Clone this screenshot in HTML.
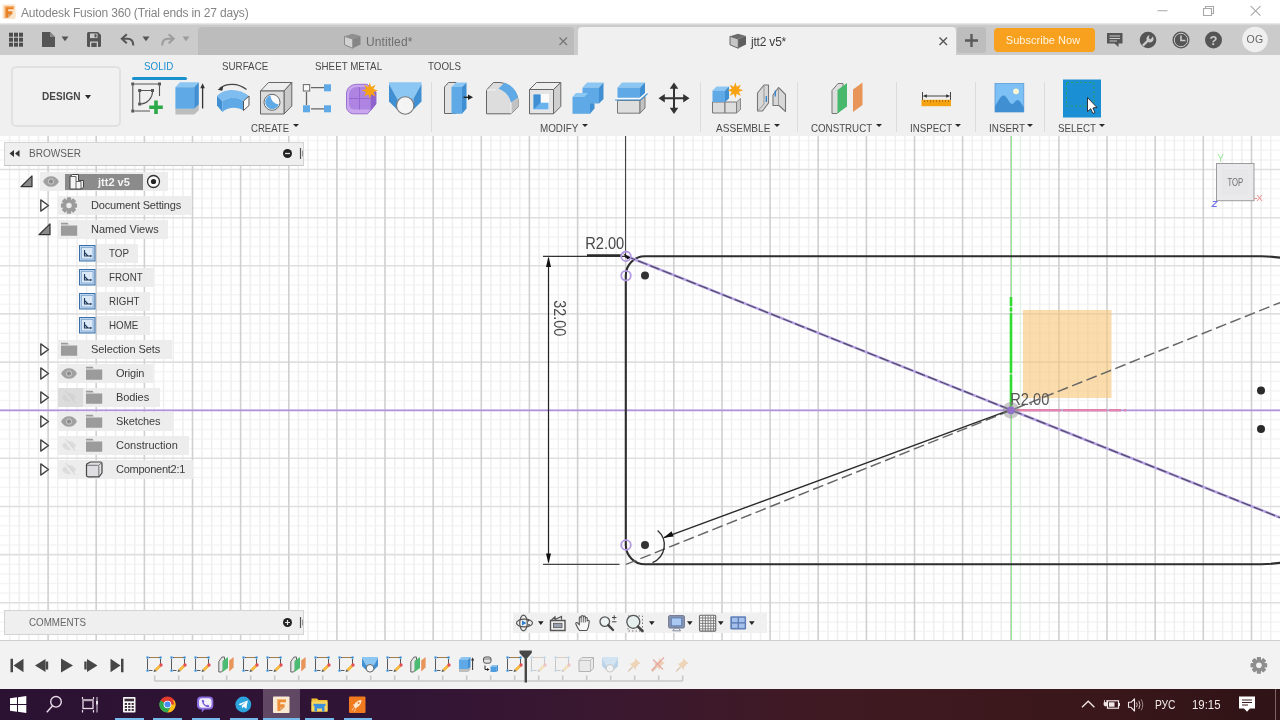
<!DOCTYPE html>
<html>
<head>
<meta charset="utf-8">
<title>Autodesk Fusion 360</title>
<style>
*{box-sizing:border-box;margin:0;padding:0}
html,body{width:1280px;height:720px;overflow:hidden;background:#fff;font-family:"Liberation Sans",sans-serif;}
#root{position:relative;width:1280px;height:720px;overflow:hidden;background:#fff;will-change:transform;-webkit-font-smoothing:antialiased}
.abs{position:absolute}
#titlebar{left:0;top:0;width:1280px;height:24px;background:#fff}
#titletext{left:21px;top:6px;font-size:12px;color:#848484;letter-spacing:-0.16px;white-space:nowrap}
#tabbar{left:0;top:24px;width:1280px;height:31px;background:#cbcbcb}
#ribbon{left:0;top:55px;width:1280px;height:81px;background:#f0f0f0}
#canvas{left:0;top:136px;width:1280px;height:504px;background:#fff}
#timeline{left:0;top:640px;width:1280px;height:49px;background:#f2f2f2;border-top:1px solid #cfcfcf}
#taskbar{left:0;top:689px;width:1280px;height:31px;background:linear-gradient(90deg,#2b1232 0%,#311436 30%,#3b182e 50%,#401a22 65%,#3a171b 85%,#2f1316 100%)}
.rtab{position:absolute;top:60px;font-size:11px;color:#4a4a4a;white-space:nowrap;letter-spacing:-0.1px}
.rlbl{position:absolute;top:121.500px;font-size:11px;color:#4a4a4a;white-space:nowrap;letter-spacing:-0.2px}
.rlbl i{display:inline-block;width:0;height:0;border-left:3px solid transparent;border-right:3px solid transparent;border-top:4px solid #333;margin-left:3px;vertical-align:2px}
.u{display:inline-block;transform:scaleX(.89);transform-origin:0 50%;letter-spacing:0}
.arr{position:absolute;top:124.200px;width:0;height:0;border-left:3px solid transparent;border-right:3px solid transparent;border-top:3.800px solid #2a2a2a}
.sep{position:absolute;top:82px;width:1px;height:50px;background:#dcdcdc}
.trow{position:absolute;height:20px;background:rgba(238,238,238,0.93);font-size:11px;color:#3c3c3c;line-height:20px;white-space:nowrap}
.tl{position:absolute;font-size:11px;color:#3c3c3c;white-space:nowrap;line-height:20px}
</style>
</head>
<body>
<div id="root">

<!-- TITLE BAR -->
<div id="titlebar" class="abs"></div>
<svg class="abs" style="left:1.500px;top:3.500px" width="15" height="16" viewBox="0 0 16 17">
<rect x="0.5" y="0.5" width="14" height="15.5" rx="1.5" fill="#fbe4c8"/>
<path d="M3 2.5H12.5V5.6H6.6V7.6H11V10.5H6.6V14.5H3Z" fill="#e8822a"/>
<path d="M3 2.5H12.5V3.6H4.2V14.5H3Z" fill="#f6a55a"/>
<path d="M6.6 10.5H11L6.6 14.5Z" fill="#b85a15" opacity="0.5"/>
</svg>
<div id="titletext" class="abs">Autodesk Fusion 360 (Trial ends in 27 days)</div>
<svg class="abs" style="left:1150px;top:0" width="130" height="24" viewBox="0 0 130 24">
<path d="M7.5 10.7H17.5" stroke="#b5b5b5" stroke-width="1.2"/>
<path d="M53.5 8.5H61.5V15.5H53.5ZM55.5 8.5V6.5H63.5V13.5H61.5" fill="none" stroke="#a8a8a8" stroke-width="1.1"/>
<path d="M100.7 6.2L110.5 15.7M110.5 6.2L100.7 15.7" stroke="#a8a8a8" stroke-width="1.1"/>
</svg>

<!-- TAB BAR -->
<div id="tabbar" class="abs"></div>
<div class="abs" style="left:0;top:23px;width:1280px;height:2px;background:linear-gradient(#eee,#d2d2d2)"></div>
<div class="abs" style="left:198px;top:27px;width:376px;height:28px;background:#bcbcbc;border-radius:4px 4px 0 0"></div>
<div class="abs" style="left:578px;top:27px;width:378px;height:28px;background:#f0f0f0;border-radius:4px 4px 0 0"></div>
<div class="abs" style="left:957px;top:27px;width:29px;height:26px;background:#bdbdbd;border-radius:3px"></div>
<div class="abs" style="left:994px;top:28px;width:101px;height:24px;background:#f8a11f;border-radius:4px;color:#fff4e0;font-size:11px;line-height:24px;text-align:center;letter-spacing:0.04px;text-indent:-3px">Subscribe Now</div>
<div class="abs" style="left:366px;top:35px;font-size:12px;color:#6e6e6e;letter-spacing:0.13px">Untitled*</div>
<div class="abs" style="left:751px;top:35px;font-size:12px;color:#3c3c3c;letter-spacing:-0.2px">jtt2 v5*</div>
<svg class="abs" style="left:0;top:24px" width="1280" height="31" viewBox="0 24 1280 31">
<!-- grid icon -->
<g fill="#4d4d4d"><rect x="9" y="32.7" width="4" height="4"/><rect x="14" y="32.7" width="4" height="4"/><rect x="19" y="32.7" width="4" height="4"/><rect x="9" y="37.7" width="4" height="4"/><rect x="14" y="37.7" width="4" height="4"/><rect x="19" y="37.7" width="4" height="4"/><rect x="9" y="42.7" width="4" height="4"/><rect x="14" y="42.7" width="4" height="4"/><rect x="19" y="42.7" width="4" height="4"/></g>
<!-- file icon -->
<path d="M42 32H50L55 37V47H42Z" fill="#555"/><path d="M50 32V37H55Z" fill="#8a8a8a"/>
<path d="M61.5 36.5H68.5L65 41.2Z" fill="#555"/>
<!-- save icon -->
<path d="M87 33.5A1.5 1.5 0 0 1 88.500 32H98L101 35V45.500A1.5 1.5 0 0 1 99.500 47H88.500A1.5 1.5 0 0 1 87 45.500Z" fill="#555"/>
<rect x="90" y="33.500" width="7.5" height="4.6" fill="#cbcbcb"/><rect x="94.5" y="34.2" width="2" height="3.200" fill="#555"/><rect x="90" y="41.500" width="8" height="5.5" fill="#cbcbcb"/><rect x="91.3" y="42.8" width="5.4" height="4.200" fill="#555"/>
<!-- undo -->
<path d="M126.800 34.300L121.800 38.800L126.800 43.300" fill="none" stroke="#555" stroke-width="2" stroke-linejoin="miter"/><path d="M122.500 38.800H127.500C131.500 38.800 133.300 41.500 133.300 45.500" fill="none" stroke="#555" stroke-width="2"/>
<path d="M142.500 36.500H149.500L146 41.200Z" fill="#555"/>
<!-- redo -->
<path d="M168.700 34.300L173.700 38.800L168.700 43.300" fill="none" stroke="#9c9c9c" stroke-width="2"/><path d="M173 38.800H168C164 38.800 162.200 41.500 162.200 45.500" fill="none" stroke="#9c9c9c" stroke-width="2"/>
<path d="M182.500 36.500H189.500L186 41.200Z" fill="#9c9c9c"/>
<!-- cube icons in tabs -->
<path d="M344.5 36.3L352.5 33.8L360.5 36L352.8 39Z" fill="#8f8f8f"/><path d="M344.5 36.3L352.8 39V48.3L344.5 44.800Z" fill="#d2d2d2"/><path d="M352.8 39L360.5 36V44.500L352.8 48.300Z" fill="#858585"/><path d="M344.5 36.3L352.8 39V48.3L344.5 44.800Z" fill="none" stroke="#8a8a8a" stroke-width="1"/>
<path d="M730 36.3L738 33.8L746 36L738.3 39Z" fill="#6c6c6c"/><path d="M730 36.3L738.3 39V48.3L730 44.800Z" fill="#c6c6c6"/><path d="M738.3 39L746 36V44.500L738.3 48.300Z" fill="#5e5e5e"/><path d="M730 36.3L738.3 39V48.3L730 44.800Z" fill="none" stroke="#666" stroke-width="1"/>
<!-- close x -->
<path d="M559.500 37.500L567 45M567 37.500L559.500 45" stroke="#777" stroke-width="1.300"/>
<path d="M939.500 37.500L947 45M947 37.500L939.500 45" stroke="#555" stroke-width="1.400"/>
<!-- plus -->
<path d="M971.500 34V47M965 40.500H978" stroke="#5a5a5a" stroke-width="2.400"/>
<!-- comment icon -->
<path d="M1107 33H1122.500V43.500H1118.500V47L1114.500 43.500H1107Z" fill="#555"/><path d="M1109.500 36H1120M1109.500 38.500H1120M1109.500 41H1117" stroke="#cbcbcb" stroke-width="1"/>
<!-- job status -->
<circle cx="1148" cy="40" r="8.300" fill="#555"/><path d="M1143.500 45L1148 40.500" stroke="#cbcbcb" stroke-width="2.400" stroke-linecap="round"/><path d="M1152.800 36.600A3.600 3.600 0 1 1 1149.600 35.300L1148.800 38L1150.500 39.500Z" fill="#cbcbcb"/>
<!-- clock -->
<circle cx="1181" cy="40" r="8.500" fill="#555"/><circle cx="1181" cy="40" r="6.700" fill="none" stroke="#cbcbcb" stroke-width="1"/><path d="M1181 35.500V40.500H1185.500" stroke="#cbcbcb" stroke-width="1.600" fill="none"/>
<!-- help -->
<circle cx="1213.500" cy="40" r="8.500" fill="#555"/>
<text x="1213.500" y="44.800" text-anchor="middle" font-family="Liberation Sans, sans-serif" font-weight="bold" font-size="13" fill="#cbcbcb">?</text>
<!-- avatar -->
<circle cx="1255" cy="39.500" r="12.800" fill="#efefef"/>
<text x="1255" y="43.400" text-anchor="middle" font-family="Liberation Sans, sans-serif" font-size="10.500" fill="#666" letter-spacing="0.300">OG</text>
</svg>

<!-- RIBBON -->
<div id="ribbon" class="abs"></div>
<div class="abs" style="left:11px;top:66px;width:110px;height:61px;border:2px solid #e1e1e1;border-radius:5px;background:#f1f1f1"></div>
<div class="abs" style="left:42px;top:90px;font-size:11px;font-weight:bold;color:#464646;letter-spacing:0"><span class="u" style="transform:scaleX(.912)">DESIGN</span></div><div class="arr" style="left:84.500px;top:94.500px;border-left-width:3.300px;border-right-width:3.300px;border-top-width:4px"></div>
<div class="rtab" style="left:144px;color:#1b8fd0"><span class="u">SOLID</span></div>
<div class="abs" style="left:132px;top:77px;width:55px;height:3px;border-radius:1.5px;background:#1a90cf"></div>
<div class="rtab" style="left:222px"><span class="u">SURFACE</span></div>
<div class="rtab" style="left:315px"><span class="u">SHEET METAL</span></div>
<div class="rtab" style="left:428px"><span class="u">TOOLS</span></div>
<div class="sep" style="left:431px"></div><div class="sep" style="left:700px"></div><div class="sep" style="left:797px"></div><div class="sep" style="left:896px"></div><div class="sep" style="left:975px"></div><div class="sep" style="left:1044px"></div>
<div class="rlbl" style="left:251px"><span class="u" style="transform:scaleX(0.868)">CREATE</span></div><div class="arr" style="left:292.6px"></div>
<div class="rlbl" style="left:540px"><span class="u" style="transform:scaleX(0.895)">MODIFY</span></div><div class="arr" style="left:582.1px"></div>
<div class="rlbl" style="left:716px"><span class="u" style="transform:scaleX(0.917)">ASSEMBLE</span></div><div class="arr" style="left:774px"></div>
<div class="rlbl" style="left:811px"><span class="u" style="transform:scaleX(0.885)">CONSTRUCT</span></div><div class="arr" style="left:876.2px"></div>
<div class="rlbl" style="left:910px"><span class="u" style="transform:scaleX(0.885)">INSPECT</span></div><div class="arr" style="left:955px"></div>
<div class="rlbl" style="left:989px"><span class="u" style="transform:scaleX(0.898)">INSERT</span></div><div class="arr" style="left:1027px"></div>
<div class="rlbl" style="left:1058px"><span class="u" style="transform:scaleX(0.888)">SELECT</span></div><div class="arr" style="left:1098.5px"></div>
<svg class="abs" style="left:0;top:76px" width="1280" height="46" viewBox="0 76 1280 46">
<!-- sketch -->
<g stroke="#555" stroke-width="1.1" fill="none"><path d="M134.500 84H158M159.500 85.500V96M132.800 85.500V109.500M134.500 111H150"/><path d="M141 90.500H151M139.700 92V102.500M152.500 92C152.500 98 147 103.500 141 104"/></g>
<g fill="#555"><rect x="131.300" y="82.500" width="3" height="3"/><rect x="158" y="82.500" width="3" height="3"/><rect x="131.300" y="109.500" width="3" height="3"/><rect x="138.200" y="89" width="3" height="3"/><rect x="151" y="89" width="3" height="3"/><rect x="138.200" y="102.500" width="3" height="3"/></g>
<path d="M154.200 100.500H157.800V105.500H162.800V109.100H157.800V114.100H154.200V109.100H149.200V105.500H154.200Z" fill="#2ea94a"/>
<!-- extrude -->
<path d="M175.400 108.800H194.200L198.800 104.500V110.200L194.200 114.500H175.400Z" fill="#bdbdbd"/>
<path d="M175.400 87.200L180 82.300H198.800L194.200 87.200Z" fill="#8cc6f2"/>
<path d="M175.400 87.200H194.200V108.800H175.400Z" fill="#5fa9e6"/>
<path d="M194.200 87.200L198.800 82.300V104.500L194.200 108.800Z" fill="#3f8fd2"/>
<path d="M202.600 86V108.500" stroke="#333" stroke-width="1.300"/><path d="M202.600 83.200L200.300 88.200H204.900Z" fill="#333"/>
<!-- revolve -->
<path d="M219.500 88.500C226 83 238 82.500 246.500 89.500" fill="none" stroke="#444" stroke-width="1.200"/><path d="M217.600 89.800L223.300 86.300L222.300 90.800Z" fill="#333"/>
<path d="M217 96C224 88 240 88 249 96L243.500 101C237 96.500 228 97 222.500 101.500Z" fill="#7fbdf0"/>
<path d="M217 96L222.500 101.500V112L217 105.500Z" fill="#3f8fd2"/>
<path d="M222.500 101.500C228 97 237 96.500 243.500 101V110.500C237 106.500 228 107 222.500 112Z" fill="#5fa9e6"/>
<path d="M243.500 101L249 96V105.500L243.500 110.500Z" fill="#fafafa" stroke="#555" stroke-width="1"/>
<!-- hole -->
<path d="M260.500 91L268.500 82.500H291.800L284 91Z" fill="#eeeeee" stroke="#666" stroke-width="1"/>
<path d="M284 91L291.800 82.500V106L284 114Z" fill="#c9c9c9" stroke="#666" stroke-width="1"/>
<path d="M260.500 91H284V114H260.500Z" fill="#dcdcdc" stroke="#666" stroke-width="1"/>
<circle cx="272" cy="102.300" r="8" fill="#fafafa" stroke="#666" stroke-width="1"/>
<path d="M270.500 95.300A7 7 0 1 0 278.800 104.500C274 104 270.500 100 270.500 95.300Z" fill="#5fa9e6"/>
<!-- pattern -->
<path d="M311 87.700H324M306.500 92V105M311 108.800H324" stroke="#666" stroke-width="1.300"/>
<rect x="303.300" y="84.600" width="6.400" height="6.400" fill="#fafafa" stroke="#666" stroke-width="1"/>
<rect x="324" y="84.300" width="7" height="7" fill="#5fa9e6"/><rect x="303" y="105.300" width="7" height="7" fill="#5fa9e6"/><rect x="324" y="105.300" width="7" height="7" fill="#5fa9e6"/>
<!-- form -->
<path d="M346.500 94C346.500 88 351 84.300 357 84.300H367L376 92V104L367.500 113.800H354C349.500 113.800 346.500 110.500 346.500 106.500Z" fill="#c9a7ee" stroke="#9a6fd0" stroke-width="1"/>
<path d="M349 95C349 90 352.500 87 357.500 87H366L370.500 92V109.500H355C351.500 109.500 349 107.500 349 104Z" fill="#ae84e2"/>
<path d="M370.500 92L376 92V104L370.500 111Z" fill="#8f63cc"/>
<path d="M359.500 87V109.500M349 98.500H370.500" stroke="#9468d0" stroke-width="1"/>
<path d="M369.80 82.40L371.29 87.00L375.60 84.80L373.40 89.11L378.00 90.60L373.40 92.09L375.60 96.40L371.29 94.20L369.80 98.80L368.31 94.20L364.00 96.40L366.20 92.09L361.60 90.60L366.20 89.11L364.00 84.80L368.31 87.00Z" fill="#f9a313"/>
<!-- loft -->
<path d="M389 82.300H421.500V84L413.500 98.500H397L389 84Z" fill="#8cc6f2"/>
<path d="M389 84L397 98.500V109.500L389 101.500Z" fill="#3f8fd2"/><path d="M421.500 84L413.500 98.500V109.500L421.500 101.500Z" fill="#3f8fd2"/>
<path d="M397 98.500H413.500V109.500H397Z" fill="#5fa9e6"/>
<circle cx="405.200" cy="105.500" r="8.700" fill="#f4f4f4" stroke="#777" stroke-width="1.100"/>
<!-- press pull -->
<path d="M444.500 87L448.500 82.500H456V113.500H444.500Z" fill="#e2e2e2" stroke="#666" stroke-width="1"/>
<path d="M451.500 87L456 82.500H466.500L462 87Z" fill="#8cc6f2"/>
<path d="M451.500 87H462V113.800H451.500Z" fill="#5fa9e6"/>
<path d="M462 87L466.500 82.500V108.500L462 113.800Z" fill="#3f8fd2"/>
<path d="M463.500 97.300H469" stroke="#222" stroke-width="1.400"/><path d="M473 97.300L468 94.500V100.100Z" fill="#222"/>
<!-- fillet -->
<path d="M486.500 90L493.500 82.500H500C509 83.500 516.500 90 518 99.500V107L511 113.800H486.500Z" fill="#dddddd" stroke="#666" stroke-width="1"/>
<path d="M511 102.500L518 97.500V107L511 113.800Z" fill="#c2c2c2"/>
<path d="M498.500 88.500L504.500 82.800C511.500 85 516.500 90.500 518 97.500L511 102.500C509.500 96 505 91 498.500 88.500Z" fill="#5fa9e6"/>
<path d="M486.500 90H496M511 102.500V113.500" stroke="#f2f2f2" stroke-width="1" fill="none"/>
<!-- shell -->
<path d="M529.500 89.500L536.500 82.500H560.800L553.500 89.500Z" fill="#eeeeee" stroke="#666" stroke-width="1"/>
<path d="M553.500 89.500L560.800 82.500V106.500L553.500 113.800Z" fill="#cfcfcf" stroke="#666" stroke-width="1"/>
<path d="M529.500 89.500H553.500V113.800H529.500Z" fill="#e4e4e4" stroke="#666" stroke-width="1"/>
<path d="M533 94H549V110H533Z" fill="#fafafa"/>
<path d="M533.500 94.500H540.500V102.800H548.500V109.500H533.500Z" fill="#6ab2ee"/><path d="M533.500 94.500H540.500V102.800L533.500 109.500Z" fill="#3f8fd2"/>
<!-- combine -->
<path d="M582.500 87.500L587 82.500H603.500L599 87.500Z" fill="#8cc6f2"/><path d="M599 87.500L603.500 82.500V99L599 103.500Z" fill="#3f8fd2"/><path d="M582.500 87.500H599V103.500H582.500Z" fill="#5fa9e6"/>
<path d="M572.500 97L576 93H588L584.500 97Z" fill="#8cc6f2"/><path d="M572.500 97H590V113.800H572.500Z" fill="#5fa9e6"/><path d="M590 103.500H594L590 113.800Z" fill="#3f8fd2"/><path d="M590 103.500L594.500 103.500V108.500L590 113.800Z" fill="#3f8fd2"/>
<!-- split -->
<path d="M617.500 100.500H640V113.200H617.500Z" fill="#dedede" stroke="#777" stroke-width="1"/><path d="M640 100.500L645 96.500V108L640 113.200Z" fill="#c2c2c2" stroke="#777" stroke-width="1"/>
<path d="M617.500 87.500L622 82.500H645L640 87.500Z" fill="#8cc6f2"/><path d="M617.500 87.500H640V98.500H617.500Z" fill="#5fa9e6"/><path d="M640 87.500L645 82.500V94L640 98.500Z" fill="#3f8fd2"/>
<path d="M615 100H640.500L647.500 93.500" stroke="#3f8fd2" stroke-width="1.200" fill="none"/><path d="M615 98.300H640L647.500 91.800" stroke="#fafafa" stroke-width="1.300" fill="none"/>
<!-- move -->
<path d="M674 86V110.500M662 98.200H686" stroke="#333" stroke-width="2"/>
<path d="M674 82.500L669.700 88.800H678.300ZM674 114L669.700 107.700H678.300ZM658.500 98.200L664.800 93.900V102.500ZM689.500 98.200L683.200 93.900V102.500Z" fill="#333"/>
<!-- new component -->
<path d="M712.500 102H725V113H712.500Z" fill="#dcdcdc" stroke="#777" stroke-width="1"/>
<path d="M725 102L729 98.500H740.500L736.500 102Z" fill="#f0f0f0"/><path d="M725 102H736.500V113H725Z" fill="#dedede" stroke="#777" stroke-width="1"/><path d="M736.500 102L740.500 98.500V109.500L736.500 113Z" fill="#c6c6c6" stroke="#777" stroke-width="0.800"/>
<path d="M712.500 90.500L716.500 86.500H729L725 90.500Z" fill="#8cc6f2"/><path d="M712.500 90.500H725V102H712.500Z" fill="#5fa9e6"/><path d="M725 90.500L729 86.500V98.500L725 102Z" fill="#3f8fd2"/>
<path d="M735.30 82.30L736.75 86.79L740.96 84.64L738.81 88.85L743.30 90.30L738.81 91.75L740.96 95.96L736.75 93.81L735.30 98.30L733.85 93.81L729.64 95.96L731.79 91.75L727.30 90.30L731.79 88.85L729.64 84.64L733.85 86.79Z" fill="#f9a313"/>
<!-- joint -->
<path d="M757.500 93L764 85H768.500V103L762.500 111H757.500Z" fill="#d8d8d8" stroke="#777" stroke-width="1.100" stroke-linejoin="round"/>
<path d="M764 85.500V104L758 110.500" fill="none" stroke="#9a9a9a" stroke-width="1"/>
<path d="M773 95L778.500 87.500L785.500 94.500V111.500L779 105.500H773Z" fill="#d8d8d8" stroke="#777" stroke-width="1.100" stroke-linejoin="round"/>
<path d="M778.500 88V105" stroke="#9a9a9a" stroke-width="1" fill="none"/>
<path d="M766.300 96V102M775.300 90.500V96.500" stroke="#2f86cf" stroke-width="1.300"/>
<!-- construct -->
<path d="M832 90.500L838 83.500H843V106.500L837 113.500H832Z" fill="#dedede" stroke="#777" stroke-width="1"/>
<path d="M837.500 90L847 83V106.500L837.500 113.500Z" fill="#48b86c"/>
<path d="M853 89.500L862.500 82.500V105L853 112Z" fill="#e8955a"/>
<!-- inspect -->
<g transform="translate(0 -1)"><path d="M922.500 93V101M950.500 93V101" stroke="#444" stroke-width="1"/><path d="M925 97H948" stroke="#444" stroke-width="1"/><path d="M922.800 97L926.800 95.200V98.800ZM950.200 97L946.200 95.200V98.800Z" fill="#333"/>
<rect x="921.500" y="100.800" width="29.500" height="6.400" fill="#f5a313"/><path d="M924.500 101V103M927.500 101V103M930.500 101V103.500M933.500 101V103M936.500 101V103M939.500 101V103.500M942.500 101V103M945.500 101V103M948.500 101V103" stroke="#a86a00" stroke-width="0.800"/></g>
<!-- insert -->
<rect x="995" y="83.500" width="28.800" height="28.500" fill="#7cc0f5"/><rect x="995" y="83.500" width="28.800" height="28.500" fill="none" stroke="#5a9bd8" stroke-width="0.800"/>
<path d="M995 106C998 102 1000.500 95.500 1003.500 95.500C1007 95.500 1009 103.500 1012 104C1014 104 1015.500 100 1017.500 100C1020 100 1022 105 1023.800 107V112H995Z" fill="#3f8fd2"/>

<circle cx="1016" cy="91.300" r="2.900" fill="#fbf5d0"/>
<!-- select -->
<rect x="1063" y="79.500" width="38" height="38" fill="#1b8fd3"/>
<rect x="1066.500" y="82.500" width="27.500" height="23.500" fill="none" stroke="#2ea06a" stroke-width="1" stroke-dasharray="2.500 2"/>
<path d="M1087.500 97.500V111.500L1090.700 108.700L1092.900 113.500L1095 112.500L1092.900 107.900L1097 107.500Z" fill="#fff" stroke="#222" stroke-width="0.900" stroke-linejoin="round"/>
</svg>

<!-- CANVAS -->
<div id="canvas" class="abs">
<svg id="cv" width="1280" height="504" viewBox="0 136 1280 504" style="position:absolute;left:0;top:0">
<rect x="0" y="136" width="1280" height="504" fill="#fff"/>
<path d="M0 140.6H1280M0 150.3H1280M0 159.9H1280M0 179.2H1280M0 188.8H1280M0 198.4H1280M0 208.0H1280M0 227.3H1280M0 236.9H1280M0 246.5H1280M0 256.2H1280M0 275.4H1280M0 285.0H1280M0 294.7H1280M0 304.3H1280M0 323.6H1280M0 333.2H1280M0 342.8H1280M0 352.4H1280M0 371.7H1280M0 381.3H1280M0 390.9H1280M0 400.6H1280M0 419.8H1280M0 429.5H1280M0 439.1H1280M0 448.7H1280M0 468.0H1280M0 477.6H1280M0 487.2H1280M0 496.8H1280M0 516.1H1280M0 525.7H1280M0 535.4H1280M0 545.0H1280M0 564.2H1280M0 573.9H1280M0 583.5H1280M0 593.1H1280M0 612.4H1280M0 622.0H1280M0 631.6H1280" stroke="#f5f5f5" stroke-width="1.5" fill="none"/>
<path d="M9.6 136V640M19.2 136V640M28.8 136V640M38.5 136V640M57.7 136V640M67.3 136V640M77.0 136V640M86.6 136V640M105.8 136V640M115.5 136V640M125.1 136V640M134.7 136V640M154.0 136V640M163.6 136V640M173.2 136V640M182.9 136V640M202.1 136V640M211.7 136V640M221.4 136V640M231.0 136V640M250.2 136V640M259.9 136V640M269.5 136V640M279.1 136V640M298.4 136V640M308.0 136V640M317.6 136V640M327.3 136V640M346.5 136V640M356.1 136V640M365.8 136V640M375.4 136V640M394.7 136V640M404.3 136V640M413.9 136V640M423.5 136V640M442.8 136V640M452.4 136V640M462.0 136V640M471.7 136V640M490.9 136V640M500.5 136V640M510.2 136V640M519.8 136V640M539.1 136V640M548.7 136V640M558.3 136V640M567.9 136V640M587.2 136V640M596.8 136V640M606.4 136V640M616.1 136V640M635.3 136V640M645.0 136V640M654.6 136V640M664.2 136V640M683.5 136V640M693.1 136V640M702.7 136V640M712.3 136V640M731.6 136V640M741.2 136V640M750.9 136V640M760.5 136V640M779.7 136V640M789.4 136V640M799.0 136V640M808.6 136V640M827.9 136V640M837.5 136V640M847.1 136V640M856.7 136V640M876.0 136V640M885.6 136V640M895.3 136V640M904.9 136V640M924.1 136V640M933.8 136V640M943.4 136V640M953.0 136V640M972.3 136V640M981.9 136V640M991.5 136V640M1001.2 136V640M1020.4 136V640M1030.0 136V640M1039.7 136V640M1049.3 136V640M1068.5 136V640M1078.2 136V640M1087.8 136V640M1097.4 136V640M1116.7 136V640M1126.3 136V640M1135.9 136V640M1145.6 136V640M1164.8 136V640M1174.4 136V640M1184.1 136V640M1193.7 136V640M1212.9 136V640M1222.6 136V640M1232.2 136V640M1241.8 136V640M1261.1 136V640M1270.7 136V640" stroke="#efefef" stroke-width="1.5" fill="none"/>
<path d="M0 169.5H1280M0 217.7H1280M0 265.8H1280M0 313.9H1280M0 362.1H1280M0 410.2H1280M0 458.3H1280M0 506.5H1280M0 554.6H1280M0 602.7H1280" stroke="#dfdfdf" stroke-width="1.6" fill="none"/>
<path d="M48.1 136V640M96.2 136V640M144.4 136V640M192.5 136V640M240.6 136V640M288.8 136V640M336.9 136V640M385.0 136V640M433.2 136V640M481.3 136V640M529.4 136V640M577.6 136V640M625.7 136V640M673.8 136V640M722.0 136V640M770.1 136V640M818.2 136V640M866.4 136V640M914.5 136V640M962.6 136V640M1010.8 136V640M1058.9 136V640M1107.0 136V640M1155.2 136V640M1203.3 136V640M1251.5 136V640" stroke="#d0d0d0" stroke-width="1.6" fill="none"/>

<!-- axes -->
<line x1="1011.5" y1="136" x2="1011.5" y2="640" stroke="#8ff08f" stroke-width="1"/>
<line x1="1020.5" y1="136" x2="1020.5" y2="640" stroke="#dff5df" stroke-width="1"/>
<line x1="0" y1="410.4" x2="1280" y2="410.4" stroke="#b093dc" stroke-width="1.8"/>
<!-- orange selection square -->
<rect x="1023" y="310" width="88.5" height="88" fill="#f9c574" fill-opacity="0.6"/>
<!-- thick green Y axis -->
<line x1="1011" y1="297" x2="1011" y2="408" stroke="#2fdc2f" stroke-width="2.6" stroke-dasharray="9 1.5 4 1.5 60 1.5 200"/>
<!-- red X axis -->
<line x1="1013" y1="410.3" x2="1126" y2="410.3" stroke="#e285ae" stroke-width="2.6" stroke-dasharray="48 2 44 2 12 3"/>
<!-- thin vertical construction up from corner -->
<line x1="625.5" y1="136" x2="625.5" y2="258" stroke="#444" stroke-width="1"/>
<!-- rectangle profile -->
<path d="M1290 259.4A134 134 0 0 0 1261.500 256.300H645.2A19.2 19.2 0 0 0 625.8 275.5V545A19.2 19.2 0 0 0 645.2 564.2H1261.500A135 135 0 0 0 1290 561.100" fill="none" stroke="#2e2e2e" stroke-width="2.1"/>

<!-- purple diagonal -->
<line x1="626" y1="256" x2="1280" y2="517.6" stroke="#b8a2e6" stroke-width="2.6"/>
<line x1="626" y1="256" x2="1280" y2="517.6" stroke="#504a6a" stroke-width="1.25" stroke-dasharray="10 3"/>
<!-- grey dashed diagonal -->
<line x1="626" y1="564.4" x2="1280" y2="302.6" stroke="#666" stroke-width="1.45" stroke-dasharray="11 4.5"/>
<!-- radial dim leader -->
<line x1="664" y1="537.6" x2="1011" y2="409.6" stroke="#2a2a2a" stroke-width="1.4"/>
<path d="M663.5 537.8L671.6 531.2 673.6 536.4Z" fill="#111"/>
<path d="M657.6 530.4A19.2 19.2 0 0 1 652.5 562.7" fill="none" stroke="#2b2b2b" stroke-width="1.3"/>
<!-- vertical dimension 32.00 -->
<line x1="548.5" y1="258" x2="548.5" y2="562" stroke="#222" stroke-width="1.2"/>
<path d="M548.5 256.6L546 267H551ZM548.5 563.8L546 553.4H551Z" fill="#111"/>
<line x1="543" y1="256.4" x2="626" y2="256.4" stroke="#333" stroke-width="1.1"/>
<line x1="587" y1="255.3" x2="621" y2="255.3" stroke="#2b2b2b" stroke-width="2"/>
<line x1="543" y1="564.4" x2="619.5" y2="564.4" stroke="#444" stroke-width="1.1"/>
<text transform="translate(553.5 300.2) rotate(90) scale(0.9 1)" font-family="Liberation Sans, sans-serif" font-size="16" fill="#484848">32.00</text>
<text transform="translate(585.2 249.400) scale(0.915 1)" font-family="Liberation Sans, sans-serif" font-size="16" fill="#484848">R2.00</text>
<text transform="translate(1010.3 404.600) scale(0.915 1)" font-family="Liberation Sans, sans-serif" font-size="16" fill="#555">R2.00</text>
<!-- snap rings -->
<circle cx="626" cy="256.3" r="4.8" fill="none" stroke="#b298e2" stroke-width="1.8"/>
<path d="M623 253.2L630.4 257.6 627.4 259.4Z" fill="#111"/>
<circle cx="626" cy="275.6" r="4.8" fill="none" stroke="#b298e2" stroke-width="1.8"/>
<circle cx="626" cy="545" r="4.8" fill="none" stroke="#b298e2" stroke-width="1.8"/>
<!-- center points -->
<circle cx="645" cy="275.6" r="4" fill="#333"/>
<circle cx="645" cy="545" r="4" fill="#333"/>
<circle cx="1261" cy="390.6" r="4" fill="#2a2a2a"/>
<circle cx="1261" cy="429" r="4" fill="#2a2a2a"/>
<!-- origin -->
<circle cx="1011" cy="410.3" r="8.4" fill="#8a8a8a" fill-opacity="0.45"/>
<circle cx="1011" cy="410.3" r="3.9" fill="#9273c8"/>
<!-- view cube -->
<rect x="1216.500" y="163.500" width="37.500" height="37.200" fill="#e8e8eb" fill-opacity="0.930" stroke="#9c9c9c" stroke-width="1"/>
<rect x="1222" y="169" width="26.500" height="26" fill="#e4e4e8" fill-opacity="0.600"/>
<text transform="translate(1227.400 185.600) scale(0.770 1)" font-family="Liberation Sans, sans-serif" font-size="10" fill="#707070">TOP</text>
<text x="1217.300" y="161.600" font-family="Liberation Sans, sans-serif" font-size="10" fill="#9be69b">Y</text>
<text x="1256.300" y="200.900" font-family="Liberation Sans, sans-serif" font-size="9.800" fill="#f08c8c">X</text>
<text x="1211.500" y="206.600" font-family="Liberation Sans, sans-serif" font-size="9.800" font-style="italic" font-weight="bold" fill="#6f6fe8">Z</text>
<path d="M1254 198.500H1257" stroke="#f08c8c" stroke-width="1"/>
</svg>
</div>

<!-- BROWSER -->
<div class="abs" style="left:4px;top:142px;width:300px;height:24px;background:#efefef;border:1px solid #d4d4d4;border-bottom-color:#c6c6c6"></div>
<div class="abs" style="left:29px;top:147px;font-size:11px;color:#5e5e5e;"><span class="u" style="transform:scaleX(.915)">BROWSER</span></div>
<div class="abs" style="left:40px;top:172px;width:128px;height:19px;background:rgba(236,236,236,0.94)"></div>
<div class="abs" style="left:65px;top:173.500px;width:78px;height:16px;background:#8b8b8b"></div>
<div class="abs" style="left:98px;top:173.500px;height:16px;line-height:16px;font-size:11px;font-weight:bold;color:#f4f4f4;letter-spacing:0;white-space:nowrap">jtt2 v5</div>
<div class="abs" style="left:58px;top:196px;width:134px;height:19px;background:rgba(236,236,236,0.94)"></div>
<div class="tl" style="left:91px;top:195.5px;height:19px;line-height:19px;letter-spacing:-0.17px">Document Settings</div>
<div class="abs" style="left:58px;top:220px;width:110px;height:19px;background:rgba(236,236,236,0.94)"></div>
<div class="tl" style="left:91px;top:219.5px;height:19px;line-height:19px">Named Views</div>
<div class="abs" style="left:97px;top:244px;width:41px;height:19px;background:rgba(236,236,236,0.94)"></div>
<div class="tl" style="left:109px;top:243.5px;height:19px;line-height:19px"><span class="u">TOP</span></div>
<div class="abs" style="left:97px;top:268px;width:57px;height:19px;background:rgba(236,236,236,0.94)"></div>
<div class="tl" style="left:109px;top:267.5px;height:19px;line-height:19px"><span class="u">FRONT</span></div>
<div class="abs" style="left:97px;top:292px;width:53px;height:19px;background:rgba(236,236,236,0.94)"></div>
<div class="tl" style="left:109px;top:291.5px;height:19px;line-height:19px"><span class="u">RIGHT</span></div>
<div class="abs" style="left:97px;top:316px;width:53px;height:19px;background:rgba(236,236,236,0.94)"></div>
<div class="tl" style="left:109px;top:315.5px;height:19px;line-height:19px"><span class="u">HOME</span></div>
<div class="abs" style="left:58px;top:340px;width:114px;height:19px;background:rgba(236,236,236,0.94)"></div>
<div class="tl" style="left:91px;top:339.5px;height:19px;line-height:19px;letter-spacing:-0.09px">Selection Sets</div>
<div class="abs" style="left:58px;top:364px;width:95px;height:19px;background:rgba(236,236,236,0.94)"></div>
<div class="tl" style="left:116px;top:363.5px;height:19px;line-height:19px;letter-spacing:-0.2px">Origin</div>
<div class="abs" style="left:58px;top:388px;width:102px;height:19px;background:rgba(236,236,236,0.94)"></div>
<div class="abs" style="left:58px;top:388px;width:25px;height:19px;background:#dcdcdc"></div>
<div class="tl" style="left:116px;top:387.5px;height:19px;line-height:19px;letter-spacing:-0.1px">Bodies</div>
<div class="abs" style="left:58px;top:412px;width:115px;height:19px;background:rgba(236,236,236,0.94)"></div>
<div class="tl" style="left:116px;top:411.5px;height:19px;line-height:19px;letter-spacing:-0.09px">Sketches</div>
<div class="abs" style="left:58px;top:436px;width:131px;height:19px;background:rgba(236,236,236,0.94)"></div>
<div class="tl" style="left:116px;top:435.5px;height:19px;line-height:19px">Construction</div>
<div class="abs" style="left:58px;top:460px;width:135px;height:19px;background:rgba(236,236,236,0.94)"></div>
<div class="tl" style="left:116px;top:459.5px;height:19px;line-height:19px;letter-spacing:-0.26px">Component2:1</div>
<svg class="abs" style="left:0;top:137px" width="310" height="360" viewBox="0 137 310 360">
<path d="M14 150L9.500 153.500L14 157ZM19.500 150L15 153.500L19.500 157Z" fill="#333"/>
<circle cx="287.500" cy="153.500" r="4.500" fill="#222"/><path d="M285 153.500H290" stroke="#e3e3e3" stroke-width="1.300"/><path d="M300.500 148V159" stroke="#555" stroke-width="1.200"/><path d="M302.500 150.500V156.500" stroke="#999" stroke-width="1"/>
<path d="M32 175.9V186.7H21Z" fill="#8a8a8a" stroke="#333" stroke-width="1.2" stroke-linejoin="round"/>
<g opacity="1"><path d="M43.0 181.5C46.5 174.5 55.5 174.5 59.0 181.5C55.5 188.5 46.5 188.5 43.0 181.5Z" fill="#a0a0a0"/><circle cx="51.0" cy="181.5" r="2.7" fill="#8e8e8e" stroke="#cfcfcf" stroke-width="1"/></g>
<path d="M70 176.500L72.500 174.500H78.500V180.500H83.500V187.500L81 189H70Z" fill="#f4f4f4" stroke="#444" stroke-width="1" stroke-linejoin="round"/><path d="M76 181.500H81V189M76 181.500V189M70 176.500H76V181.500" fill="none" stroke="#555" stroke-width="0.900"/>
<circle cx="153.500" cy="181.500" r="6" fill="#fbfbfb" stroke="#333" stroke-width="1.300"/><circle cx="153.500" cy="181.500" r="2.600" fill="#222"/>
<path d="M40.8 199.9L48.5 205.5L40.8 211.1Z" fill="#fbfbfb" stroke="#444" stroke-width="1.4" stroke-linejoin="round"/>
<rect x="66.900" y="197.5" width="4.200" height="16" rx="0.600" transform="rotate(0 69 205.5)" fill="#9b9b9b"/><rect x="66.900" y="197.5" width="4.200" height="16" rx="0.600" transform="rotate(45 69 205.5)" fill="#9b9b9b"/><rect x="66.900" y="197.5" width="4.200" height="16" rx="0.600" transform="rotate(90 69 205.5)" fill="#9b9b9b"/><rect x="66.900" y="197.5" width="4.200" height="16" rx="0.600" transform="rotate(135 69 205.5)" fill="#9b9b9b"/><rect x="66.900" y="197.5" width="4.200" height="16" rx="0.600" transform="rotate(180 69 205.5)" fill="#9b9b9b"/><rect x="66.900" y="197.5" width="4.200" height="16" rx="0.600" transform="rotate(225 69 205.5)" fill="#9b9b9b"/><rect x="66.900" y="197.5" width="4.200" height="16" rx="0.600" transform="rotate(270 69 205.5)" fill="#9b9b9b"/><rect x="66.900" y="197.5" width="4.200" height="16" rx="0.600" transform="rotate(315 69 205.5)" fill="#9b9b9b"/><circle cx="69" cy="205.5" r="5.800" fill="#9b9b9b"/><circle cx="69" cy="205.5" r="2.700" fill="#ececec"/>
<path d="M50 223.9V234.7H39Z" fill="#8a8a8a" stroke="#333" stroke-width="1.2" stroke-linejoin="round"/>
<path d="M61.0 222.8H67.6L68.8 224.6H61.0ZM61.0 225.4H77.2V235.8H61.0Z" fill="#9b9b9b"/>
<rect x="79.5" y="245.5" width="15.5" height="15.5" fill="#bcd6f0" stroke="#3a6ea5" stroke-width="1"/><rect x="81.5" y="247.5" width="11.5" height="11.5" fill="#dbe9f7" stroke="#7fa6cf" stroke-width="0.8"/><path d="M84.5 250.0V256.0H90.5M84.5 252.5L88 256.0" fill="none" stroke="#1f3b5c" stroke-width="1.1"/><circle cx="90.8" cy="256.0" r="0.9" fill="#1f3b5c"/>
<rect x="79.5" y="269.5" width="15.5" height="15.5" fill="#bcd6f0" stroke="#3a6ea5" stroke-width="1"/><rect x="81.5" y="271.5" width="11.5" height="11.5" fill="#dbe9f7" stroke="#7fa6cf" stroke-width="0.8"/><path d="M84.5 274.0V280.0H90.5M84.5 276.5L88 280.0" fill="none" stroke="#1f3b5c" stroke-width="1.1"/><circle cx="90.8" cy="280.0" r="0.9" fill="#1f3b5c"/>
<rect x="79.5" y="293.5" width="15.5" height="15.5" fill="#bcd6f0" stroke="#3a6ea5" stroke-width="1"/><rect x="81.5" y="295.5" width="11.5" height="11.5" fill="#dbe9f7" stroke="#7fa6cf" stroke-width="0.8"/><path d="M84.5 298.0V304.0H90.5M84.5 300.5L88 304.0" fill="none" stroke="#1f3b5c" stroke-width="1.1"/><circle cx="90.8" cy="304.0" r="0.9" fill="#1f3b5c"/>
<rect x="79.5" y="317.5" width="15.5" height="15.5" fill="#bcd6f0" stroke="#3a6ea5" stroke-width="1"/><rect x="81.5" y="319.5" width="11.5" height="11.5" fill="#dbe9f7" stroke="#7fa6cf" stroke-width="0.8"/><path d="M84.5 322.0V328.0H90.5M84.5 324.5L88 328.0" fill="none" stroke="#1f3b5c" stroke-width="1.1"/><circle cx="90.8" cy="328.0" r="0.9" fill="#1f3b5c"/>
<path d="M40.8 343.9L48.5 349.5L40.8 355.1Z" fill="#fbfbfb" stroke="#444" stroke-width="1.4" stroke-linejoin="round"/>
<path d="M61.0 342.8H67.6L68.8 344.6H61.0ZM61.0 345.4H77.2V355.8H61.0Z" fill="#9b9b9b"/>
<path d="M40.8 367.9L48.5 373.5L40.8 379.1Z" fill="#fbfbfb" stroke="#444" stroke-width="1.4" stroke-linejoin="round"/>
<g opacity="1"><path d="M61.0 373.5C64.5 366.5 73.5 366.5 77.0 373.5C73.5 380.5 64.5 380.5 61.0 373.5Z" fill="#a0a0a0"/><circle cx="69.0" cy="373.5" r="2.7" fill="#8e8e8e" stroke="#cfcfcf" stroke-width="1"/></g>
<path d="M86.0 366.8H92.6L93.8 368.6H86.0ZM86.0 369.4H102.2V379.8H86.0Z" fill="#9b9b9b"/>
<path d="M40.8 391.9L48.5 397.5L40.8 403.1Z" fill="#fbfbfb" stroke="#444" stroke-width="1.4" stroke-linejoin="round"/>
<g opacity="0.55"><path d="M62 397.5C65 391.5 73 391.5 76 397.5C73 403.5 65 403.5 62 397.5Z" fill="#cfcfcf"/><path d="M64 391.5L74 403.5" stroke="#dcdcdc" stroke-width="2.2"/><path d="M65.5 391.0L75.5 403.0" stroke="#c4c4c4" stroke-width="1"/></g>
<path d="M86.0 390.8H92.6L93.8 392.6H86.0ZM86.0 393.4H102.2V403.8H86.0Z" fill="#9b9b9b"/>
<path d="M40.8 415.9L48.5 421.5L40.8 427.1Z" fill="#fbfbfb" stroke="#444" stroke-width="1.4" stroke-linejoin="round"/>
<g opacity="1"><path d="M61.0 421.5C64.5 414.5 73.5 414.5 77.0 421.5C73.5 428.5 64.5 428.5 61.0 421.5Z" fill="#a0a0a0"/><circle cx="69.0" cy="421.5" r="2.7" fill="#8e8e8e" stroke="#cfcfcf" stroke-width="1"/></g>
<path d="M86.0 414.8H92.6L93.8 416.6H86.0ZM86.0 417.4H102.2V427.8H86.0Z" fill="#9b9b9b"/>
<path d="M40.8 439.9L48.5 445.5L40.8 451.1Z" fill="#fbfbfb" stroke="#444" stroke-width="1.4" stroke-linejoin="round"/>
<g opacity="0.55"><path d="M62 445.5C65 439.5 73 439.5 76 445.5C73 451.5 65 451.5 62 445.5Z" fill="#cfcfcf"/><path d="M64 439.5L74 451.5" stroke="#ececec" stroke-width="2.2"/><path d="M65.5 439.0L75.5 451.0" stroke="#c4c4c4" stroke-width="1"/></g>
<path d="M86.0 438.8H92.6L93.8 440.6H86.0ZM86.0 441.4H102.2V451.8H86.0Z" fill="#9b9b9b"/>
<path d="M40.8 463.9L48.5 469.5L40.8 475.1Z" fill="#fbfbfb" stroke="#444" stroke-width="1.4" stroke-linejoin="round"/>
<g opacity="0.55"><path d="M62 469.5C65 463.5 73 463.5 76 469.5C73 475.5 65 475.5 62 469.5Z" fill="#cfcfcf"/><path d="M64 463.5L74 475.5" stroke="#ececec" stroke-width="2.2"/><path d="M65.5 463.0L75.5 475.0" stroke="#c4c4c4" stroke-width="1"/></g>
<path d="M86.500 465.0Q86.500 463.5 88 463.3L90.500 462.0H100.500Q102 462.0 102 463.5V473.0L99 476.8H88Q86.500 476.8 86.500 475.3Z" fill="#dddde2" stroke="#444" stroke-width="1.200" stroke-linejoin="round"/><path d="M87 465.3H97.500Q98.800 465.3 98.800 466.6V476.5M98.500 465.5L101.800 462.5" fill="none" stroke="#666" stroke-width="0.900"/>
</svg>
<!-- COMMENTS -->
<div class="abs" style="left:4px;top:610px;width:300px;height:25px;background:#efefef;border:1px solid #d4d4d4"></div>
<div class="abs" style="left:29px;top:616px;font-size:11px;color:#666;"><span class="u">COMMENTS</span></div>
<svg class="abs" style="left:280px;top:612px" width="26" height="22" viewBox="280 612 26 22"><circle cx="287.500" cy="622.500" r="4.500" fill="#222"/><path d="M285 622.500H290M287.500 620V625" stroke="#e3e3e3" stroke-width="1.200"/><path d="M300.500 617V628" stroke="#555" stroke-width="1.200"/><path d="M302.500 619.500V625.500" stroke="#999" stroke-width="1"/></svg>
<!-- NAVBAR -->
<div class="abs" style="left:513px;top:613px;width:254px;height:20px;background:#f0f0f0"></div>
<svg class="abs" style="left:513px;top:611px" width="254" height="24" viewBox="513 611 254 24">
<ellipse cx="524.500" cy="623" rx="8" ry="3.800" fill="none" stroke="#555" stroke-width="1.200"/><ellipse cx="523.500" cy="623" rx="3.800" ry="7.800" fill="none" stroke="#555" stroke-width="1.200"/><path d="M522 620.500L526.500 623L522 625.500Z" fill="#2f7fd0"/><circle cx="528.500" cy="620.500" r="0.900" fill="#444"/><circle cx="529" cy="624.800" r="0.900" fill="#444"/><path d="M538 621.3H543.6L540.8 625.0999999999999Z" fill="#222"/><path d="M550.500 620.500H565V630.500H550.500Z" fill="#f4f4f4" stroke="#555" stroke-width="1.400"/><rect x="553.500" y="623.300" width="8.500" height="4.400" fill="#9aa0ac" stroke="#555" stroke-width="0.800"/><path d="M551.500 620L555 616.800V619.500L561.500 616.500V619.800" fill="none" stroke="#555" stroke-width="1.200"/><path d="M579.500 630.500C577.500 628 576.500 625.500 575.800 623.800C575.500 622.600 577 622 577.900 623.200L579.300 625V617.800C579.300 616.500 581.200 616.500 581.200 617.800V616.500C581.200 615.200 583.300 615.200 583.300 616.500V617C583.300 615.800 585.300 615.800 585.300 617V618.300C585.300 617.200 587.200 617.200 587.200 618.300V621C587.500 619.800 589.300 620 589.200 621.300C589 624.500 588.500 628 586.800 630.500Z" fill="#f8f8f8" stroke="#555" stroke-width="1.100" stroke-linejoin="round"/><path d="M581.200 617.800V622.500M583.300 617V622.500M585.300 618.300V622.500" stroke="#555" stroke-width="0.900"/><circle cx="604.800" cy="621.600" r="4.800" fill="#eef4f4" stroke="#555" stroke-width="1.300"/><path d="M608.300 625.200L613 630" stroke="#444" stroke-width="2.400" stroke-linecap="round"/><path d="M612 617.500H616.500M614.200 615.300V619.700M612 621.800H616.500" stroke="#444" stroke-width="1"/><path d="M628 616H642.500V631H628Z" fill="none" stroke="#777" stroke-width="1" stroke-dasharray="1.500 2"/><circle cx="633.300" cy="621.800" r="6.500" fill="#e6f0ee" stroke="#555" stroke-width="1.300"/><path d="M638 626.600L642.500 631" stroke="#444" stroke-width="2.600" stroke-linecap="round"/><path d="M649 621.3H654.6L651.8 625.0999999999999Z" fill="#222"/><rect x="668.500" y="615.500" width="16" height="12.600" rx="1.500" fill="#8592ae" stroke="#66708a" stroke-width="0.800"/><rect x="671.300" y="618" width="10.400" height="7.800" fill="#a9c9f2" stroke="#5a79b0" stroke-width="0.800"/><path d="M674.500 628.300H678.800L680.500 630.800H672.800Z" fill="#f4f4f4" stroke="#66708a" stroke-width="0.800"/><path d="M687 621.3H692.6L689.8 625.0999999999999Z" fill="#222"/><rect x="699.500" y="615.300" width="16.200" height="15.800" rx="1" fill="#fafafa" stroke="#666" stroke-width="1.100"/><path d="M702.700 615.500V631M705.400 615.500V631M708.100 615.500V631M710.800 615.500V631M713.500 615.500V631M699.500 618V618H715.700M699.500 620.700H715.700M699.500 623.400H715.700M699.500 626.100H715.700M699.500 628.800H715.700" stroke="#777" stroke-width="0.900"/><path d="M718 621.3H723.6L720.8 625.0999999999999Z" fill="#222"/><rect x="730.300" y="616.200" width="15.800" height="13.200" rx="1.200" fill="#5f7fb8"/><rect x="732" y="617.800" width="5.600" height="4.300" fill="#a5c0ea"/><rect x="739" y="617.800" width="5.600" height="4.300" fill="#a5c0ea"/><rect x="732" y="623.600" width="5.600" height="4.300" fill="#a5c0ea"/><rect x="739" y="623.600" width="5.600" height="4.300" fill="#a5c0ea"/><path d="M749 621.3H754.6L751.8 625.0999999999999Z" fill="#222"/>
</svg>
<!-- TIMELINE -->
<div id="timeline" class="abs"></div>
<svg class="abs" style="left:0;top:641px" width="1280" height="48" viewBox="0 641 1280 48">
<g fill="#474747"><path d="M10.500 658.800H13V672.200H10.500ZM23.500 658.800V672.200L13.500 665.500Z"/><path d="M45.500 659V672L35 665.500ZM45.800 661.500H48.200V669.500H45.800Z"/><path d="M61 658.500V672.500L73 665.500Z"/><path d="M87 659V672L97.500 665.500ZM84.300 661.500H86.700V669.500H84.300Z"/><path d="M121 658.800H123.500V672.200H121ZM110.500 658.800V672.200L120.500 665.500Z"/></g>
<path d="M154.700 681H683" stroke="#c9c9c9" stroke-width="1.600" fill="none"/>
<path d="M154.7 675.5V681M178.7 675.5V681M202.7 675.5V681M226.7 675.5V681M250.7 675.5V681M274.7 675.5V681M298.7 675.5V681M322.7 675.5V681M346.7 675.5V681M370.7 675.5V681M394.7 675.5V681M418.7 675.5V681M442.7 675.5V681M466.7 675.5V681M490.7 675.5V681M514.7 675.5V681M538.7 675.5V681M562.7 675.5V681M586.7 675.5V681M610.7 675.5V681M634.7 675.5V681M658.7 675.5V681M682.7 675.5V681" stroke="#c9c9c9" stroke-width="1.600" fill="none"/>
<g opacity="1"><path d="M149 657.5H159.5M147.5 659V669.5M160.5 659V664M149 670.5H152.5" stroke="#5a5a5a" stroke-width="1" fill="none"/><path d="M150 657.5H158.5" stroke="#a08050" stroke-width="1"/><rect x="146.5" y="656.5" width="2.1" height="2.1" fill="#2f86d6"/><rect x="159.5" y="656.5" width="2.1" height="2.1" fill="#2f86d6"/><rect x="146.5" y="669.5" width="2.1" height="2.1" fill="#2f86d6"/><path d="M154.5 669.2L159.4 664.4L161.4 666.4L156.5 671.2Z" fill="#f5b83a"/><path d="M154.5 669.2L156.5 671.2L153.5 672Z" fill="#555"/><circle cx="161" cy="665" r="1.7" fill="#e8505a"/></g>
<g opacity="1"><path d="M173 657.5H183.5M171.5 659V669.5M184.5 659V664M173 670.5H176.5" stroke="#5a5a5a" stroke-width="1" fill="none"/><path d="M174 657.5H182.5" stroke="#a08050" stroke-width="1"/><rect x="170.5" y="656.5" width="2.1" height="2.1" fill="#2f86d6"/><rect x="183.5" y="656.5" width="2.1" height="2.1" fill="#2f86d6"/><rect x="170.5" y="669.5" width="2.1" height="2.1" fill="#2f86d6"/><path d="M178.5 669.2L183.4 664.4L185.4 666.4L180.5 671.2Z" fill="#f5b83a"/><path d="M178.5 669.2L180.5 671.2L177.5 672Z" fill="#555"/><circle cx="185" cy="665" r="1.7" fill="#e8505a"/></g>
<g opacity="1"><path d="M197 657.5H207.5M195.5 659V669.5M208.5 659V664M197 670.5H200.5" stroke="#5a5a5a" stroke-width="1" fill="none"/><path d="M198 657.5H206.5" stroke="#a08050" stroke-width="1"/><rect x="194.5" y="656.5" width="2.1" height="2.1" fill="#2f86d6"/><rect x="207.5" y="656.5" width="2.1" height="2.1" fill="#2f86d6"/><rect x="194.5" y="669.5" width="2.1" height="2.1" fill="#2f86d6"/><path d="M202.5 669.2L207.4 664.4L209.4 666.4L204.5 671.2Z" fill="#f5b83a"/><path d="M202.5 669.2L204.5 671.2L201.5 672Z" fill="#555"/><circle cx="209" cy="665" r="1.7" fill="#e8505a"/></g>
<g opacity="1"><path d="M218.8 661.5L222 657H224.5V668L221.5 672H218.8Z" fill="#e6e6e6" stroke="#666" stroke-width="1"/><path d="M222.5 661L228 657V668L222.5 672Z" fill="#4cba70"/><path d="M229.2 660.5L233.6 657V667.5L229.2 671.5Z" fill="#e8955a"/></g>
<g opacity="1"><path d="M245 657.5H255.5M243.5 659V669.5M256.5 659V664M245 670.5H248.5" stroke="#5a5a5a" stroke-width="1" fill="none"/><path d="M246 657.5H254.5" stroke="#a08050" stroke-width="1"/><rect x="242.5" y="656.5" width="2.1" height="2.1" fill="#2f86d6"/><rect x="255.5" y="656.5" width="2.1" height="2.1" fill="#2f86d6"/><rect x="242.5" y="669.5" width="2.1" height="2.1" fill="#2f86d6"/><path d="M250.5 669.2L255.4 664.4L257.4 666.4L252.5 671.2Z" fill="#f5b83a"/><path d="M250.5 669.2L252.5 671.2L249.5 672Z" fill="#555"/><circle cx="257" cy="665" r="1.7" fill="#e8505a"/></g>
<g opacity="1"><path d="M269 657.5H279.5M267.5 659V669.5M280.5 659V664M269 670.5H272.5" stroke="#5a5a5a" stroke-width="1" fill="none"/><path d="M270 657.5H278.5" stroke="#a08050" stroke-width="1"/><rect x="266.5" y="656.5" width="2.1" height="2.1" fill="#2f86d6"/><rect x="279.5" y="656.5" width="2.1" height="2.1" fill="#2f86d6"/><rect x="266.5" y="669.5" width="2.1" height="2.1" fill="#2f86d6"/><path d="M274.5 669.2L279.4 664.4L281.4 666.4L276.5 671.2Z" fill="#f5b83a"/><path d="M274.5 669.2L276.5 671.2L273.5 672Z" fill="#555"/><circle cx="281" cy="665" r="1.7" fill="#e8505a"/></g>
<g opacity="1"><path d="M290.8 661.5L294 657H296.5V668L293.5 672H290.8Z" fill="#e6e6e6" stroke="#666" stroke-width="1"/><path d="M294.5 661L300 657V668L294.5 672Z" fill="#4cba70"/><path d="M301.2 660.5L305.6 657V667.5L301.2 671.5Z" fill="#e8955a"/></g>
<g opacity="1"><path d="M317 657.5H327.5M315.5 659V669.5M328.5 659V664M317 670.5H320.5" stroke="#5a5a5a" stroke-width="1" fill="none"/><path d="M318 657.5H326.5" stroke="#a08050" stroke-width="1"/><rect x="314.5" y="656.5" width="2.1" height="2.1" fill="#2f86d6"/><rect x="327.5" y="656.5" width="2.1" height="2.1" fill="#2f86d6"/><rect x="314.5" y="669.5" width="2.1" height="2.1" fill="#2f86d6"/><path d="M322.5 669.2L327.4 664.4L329.4 666.4L324.5 671.2Z" fill="#f5b83a"/><path d="M322.5 669.2L324.5 671.2L321.5 672Z" fill="#555"/><circle cx="329" cy="665" r="1.7" fill="#e8505a"/></g>
<g opacity="1"><path d="M341 657.5H351.5M339.5 659V669.5M352.5 659V664M341 670.5H344.5" stroke="#5a5a5a" stroke-width="1" fill="none"/><path d="M342 657.5H350.5" stroke="#a08050" stroke-width="1"/><rect x="338.5" y="656.5" width="2.1" height="2.1" fill="#2f86d6"/><rect x="351.5" y="656.5" width="2.1" height="2.1" fill="#2f86d6"/><rect x="338.5" y="669.5" width="2.1" height="2.1" fill="#2f86d6"/><path d="M346.5 669.2L351.4 664.4L353.4 666.4L348.5 671.2Z" fill="#f5b83a"/><path d="M346.5 669.2L348.5 671.2L345.5 672Z" fill="#555"/><circle cx="353" cy="665" r="1.7" fill="#e8505a"/></g>
<g opacity="1"><path d="M362 657H378V658L374 665H366L362 658Z" fill="#8cc6f2"/><path d="M362 658L366 665V670L362 666ZM378 658L374 665V670L378 666Z" fill="#3f8fd2"/><rect x="366" y="665" width="8" height="5" fill="#5fa9e6"/><circle cx="370" cy="668.3" r="3.8" fill="#f6f6f6" stroke="#666" stroke-width="1"/></g>
<g opacity="1"><path d="M389 657.5H399.5M387.5 659V669.5M400.5 659V664M389 670.5H392.5" stroke="#5a5a5a" stroke-width="1" fill="none"/><path d="M390 657.5H398.5" stroke="#a08050" stroke-width="1"/><rect x="386.5" y="656.5" width="2.1" height="2.1" fill="#2f86d6"/><rect x="399.5" y="656.5" width="2.1" height="2.1" fill="#2f86d6"/><rect x="386.5" y="669.5" width="2.1" height="2.1" fill="#2f86d6"/><path d="M394.5 669.2L399.4 664.4L401.4 666.4L396.5 671.2Z" fill="#f5b83a"/><path d="M394.5 669.2L396.5 671.2L393.5 672Z" fill="#555"/><circle cx="401" cy="665" r="1.7" fill="#e8505a"/></g>
<g opacity="1"><path d="M410.8 661.5L414 657H416.5V668L413.5 672H410.8Z" fill="#e6e6e6" stroke="#666" stroke-width="1"/><path d="M414.5 661L420 657V668L414.5 672Z" fill="#4cba70"/><path d="M421.2 660.5L425.6 657V667.5L421.2 671.5Z" fill="#e8955a"/></g>
<g opacity="1"><path d="M437 657.5H447.5M435.5 659V669.5M448.5 659V664M437 670.5H440.5" stroke="#5a5a5a" stroke-width="1" fill="none"/><path d="M438 657.5H446.5" stroke="#a08050" stroke-width="1"/><rect x="434.5" y="656.5" width="2.1" height="2.1" fill="#2f86d6"/><rect x="447.5" y="656.5" width="2.1" height="2.1" fill="#2f86d6"/><rect x="434.5" y="669.5" width="2.1" height="2.1" fill="#2f86d6"/><path d="M442.5 669.2L447.4 664.4L449.4 666.4L444.5 671.2Z" fill="#f5b83a"/><path d="M442.5 669.2L444.5 671.2L441.5 672Z" fill="#555"/><circle cx="449" cy="665" r="1.7" fill="#e8505a"/></g>
<g opacity="1"><path d="M459 669H468L470.5 667V669.8L468 672H459Z" fill="#bdbdbd"/><path d="M459 659.5L461.5 657H470.5L468 659.5Z" fill="#8cc6f2"/><rect x="459" y="659.5" width="9" height="9.5" fill="#5fa9e6"/><path d="M468 659.5L470.5 657V667L468 669Z" fill="#3f8fd2"/><path d="M472.6 659.5V670" stroke="#333" stroke-width="1"/><path d="M472.6 657.3L471 660.6H474.2Z" fill="#333"/></g>
<rect x="483.5" y="657" width="7.5" height="6.2" rx="2" fill="#e2e2e2" stroke="#555" stroke-width="1"/><path d="M483.5 659H491" stroke="#555" stroke-width="0.7"/><path d="M490.5 666.5L492 665H498L496.5 666.5Z" fill="#8cc6f2"/><rect x="490.5" y="666.5" width="6" height="5.5" fill="#4f9fe0"/><path d="M496.5 666.5L498 665V670.5L496.5 672Z" fill="#3f8fd2"/><path d="M485 665.5V669.5H487.5" stroke="#222" stroke-width="1" fill="none"/><path d="M489.5 669.5L487 668V671Z" fill="#222"/>
<g opacity="1"><path d="M509 657.5H519.5M507.5 659V669.5M520.5 659V664M509 670.5H512.5" stroke="#5a5a5a" stroke-width="1" fill="none"/><path d="M510 657.5H518.5" stroke="#a08050" stroke-width="1"/><rect x="506.5" y="656.5" width="2.1" height="2.1" fill="#2f86d6"/><rect x="519.5" y="656.5" width="2.1" height="2.1" fill="#2f86d6"/><rect x="506.5" y="669.5" width="2.1" height="2.1" fill="#2f86d6"/><path d="M514.5 669.2L519.4 664.4L521.4 666.4L516.5 671.2Z" fill="#f5b83a"/><path d="M514.5 669.2L516.5 671.2L513.5 672Z" fill="#555"/><circle cx="521" cy="665" r="1.7" fill="#e8505a"/></g>
<g opacity="0.28"><path d="M533 657.5H543.5M531.5 659V669.5M544.5 659V664M533 670.5H536.5" stroke="#5a5a5a" stroke-width="1" fill="none"/><path d="M534 657.5H542.5" stroke="#a08050" stroke-width="1"/><rect x="530.5" y="656.5" width="2.1" height="2.1" fill="#2f86d6"/><rect x="543.5" y="656.5" width="2.1" height="2.1" fill="#2f86d6"/><rect x="530.5" y="669.5" width="2.1" height="2.1" fill="#2f86d6"/><path d="M538.5 669.2L543.4 664.4L545.4 666.4L540.5 671.2Z" fill="#f5b83a"/><path d="M538.5 669.2L540.5 671.2L537.5 672Z" fill="#555"/><circle cx="545" cy="665" r="1.7" fill="#e8505a"/></g><g opacity="0.28"><path d="M557 657.5H567.5M555.5 659V669.5M568.5 659V664M557 670.5H560.5" stroke="#5a5a5a" stroke-width="1" fill="none"/><path d="M558 657.5H566.5" stroke="#a08050" stroke-width="1"/><rect x="554.5" y="656.5" width="2.1" height="2.1" fill="#2f86d6"/><rect x="567.5" y="656.5" width="2.1" height="2.1" fill="#2f86d6"/><rect x="554.5" y="669.5" width="2.1" height="2.1" fill="#2f86d6"/><path d="M562.5 669.2L567.4 664.4L569.4 666.4L564.5 671.2Z" fill="#f5b83a"/><path d="M562.5 669.2L564.5 671.2L561.5 672Z" fill="#555"/><circle cx="569" cy="665" r="1.7" fill="#e8505a"/></g><g opacity="0.5"><path d="M579 660.5L582 657.5H593.5V668L590.5 671.5H579Z" fill="#e2e2e2" stroke="#777" stroke-width="1" stroke-linejoin="round"/><path d="M579 660.5H590.5V671.5M590.5 660.5L593.5 657.5" fill="none" stroke="#888" stroke-width="0.9"/></g><g opacity="0.3"><path d="M602 657H618V658L614 665H606L602 658Z" fill="#8cc6f2"/><path d="M602 658L606 665V670L602 666ZM618 658L614 665V670L618 666Z" fill="#3f8fd2"/><rect x="606" y="665" width="8" height="5" fill="#5fa9e6"/><circle cx="610" cy="668.3" r="3.8" fill="#f6f6f6" stroke="#666" stroke-width="1"/></g><g opacity="0.4"><path d="M635 658L640.5 663.5L638.5 664.2L635.8 667.8L636 670L629.5 663.5L631.6 663.6L635.2 660.8Z" fill="#e8a560"/><path d="M632.5 667L628 671.5" stroke="#c08850" stroke-width="1.3"/></g><g opacity="0.45"><path d="M659 658L664.5 663.5L662.5 664.2L659.8 667.8L660 670L653.5 663.5L655.6 663.6L659.2 660.8Z" fill="#e8a560"/><path d="M656.5 667L652 671.5" stroke="#c08850" stroke-width="1.3"/><path d="M651.5 670.5L664 657.5M653 659.5L663 669.5" stroke="#e05050" stroke-width="1.2"/></g><g opacity="0.4"><path d="M683 658L688.5 663.5L686.5 664.2L683.8 667.8L684 670L677.5 663.5L679.6 663.6L683.2 660.8Z" fill="#e8a560"/><path d="M680.5 667L676 671.5" stroke="#c08850" stroke-width="1.3"/></g>
<path d="M519.500 650.600H531.800V653L527 658.500V682.500H524.600V658.500L519.500 653Z" fill="#474747"/>
<rect x="1256.9" y="657.0999999999999" width="4" height="16.400" rx="0.600" transform="rotate(0 1258.9 665.3)" fill="#8e8e8e"/><rect x="1256.9" y="657.0999999999999" width="4" height="16.400" rx="0.600" transform="rotate(45 1258.9 665.3)" fill="#8e8e8e"/><rect x="1256.9" y="657.0999999999999" width="4" height="16.400" rx="0.600" transform="rotate(90 1258.9 665.3)" fill="#8e8e8e"/><rect x="1256.9" y="657.0999999999999" width="4" height="16.400" rx="0.600" transform="rotate(135 1258.9 665.3)" fill="#8e8e8e"/><rect x="1256.9" y="657.0999999999999" width="4" height="16.400" rx="0.600" transform="rotate(180 1258.9 665.3)" fill="#8e8e8e"/><rect x="1256.9" y="657.0999999999999" width="4" height="16.400" rx="0.600" transform="rotate(225 1258.9 665.3)" fill="#8e8e8e"/><rect x="1256.9" y="657.0999999999999" width="4" height="16.400" rx="0.600" transform="rotate(270 1258.9 665.3)" fill="#8e8e8e"/><rect x="1256.9" y="657.0999999999999" width="4" height="16.400" rx="0.600" transform="rotate(315 1258.9 665.3)" fill="#8e8e8e"/><circle cx="1258.9" cy="665.3" r="5.900" fill="#8e8e8e"/><circle cx="1258.9" cy="665.3" r="2.800" fill="#f2f2f2"/>
</svg>

<!-- TASKBAR -->
<div id="taskbar" class="abs"></div>
<div class="abs" style="left:263px;top:689px;width:37px;height:31px;background:rgba(150,130,150,0.48)"></div>
<div class="abs" style="left:115px;top:718px;width:28.5px;height:2px;background:#76b9ed"></div>
<div class="abs" style="left:153px;top:718px;width:29px;height:2px;background:#76b9ed"></div>
<div class="abs" style="left:191.5px;top:718px;width:28.5px;height:2px;background:#76b9ed"></div>
<div class="abs" style="left:229.5px;top:718px;width:28.5px;height:2px;background:#76b9ed"></div>
<div class="abs" style="left:263px;top:718px;width:37px;height:2px;background:#76b9ed"></div>
<div class="abs" style="left:305px;top:718px;width:29px;height:2px;background:#76b9ed"></div>
<div class="abs" style="left:343.5px;top:718px;width:28.5px;height:2px;background:#76b9ed"></div>
<div class="abs" style="left:1155px;top:698px;font-size:12.500px;color:#f2eaea;letter-spacing:0;line-height:14px"><span class="u" style="transform:scaleX(.82)">РУС</span></div>
<div class="abs" style="left:1191.500px;top:698px;font-size:12.500px;color:#f2eaea;letter-spacing:0;line-height:14px"><span class="u" style="transform:scaleX(.91)">19:15</span></div>
<svg class="abs" style="left:0;top:689px" width="1280" height="31" viewBox="0 689 1280 31">
<path d="M10 698.300L17 697.300V704H10ZM18 697.150L26.300 696V704H18ZM10 705H17V711.700L10 710.700ZM18 705H26.300V713L18 711.850Z" fill="#fff"/>
<circle cx="56" cy="701.800" r="5.300" fill="none" stroke="#e8dcea" stroke-width="1.400"/><path d="M52.400 706L46.800 712.300" stroke="#e8dcea" stroke-width="1.500"/>
<path d="M82.500 697V699.500M82.500 710V712.500M93.500 697V699.500M93.500 710V712.500" stroke="#e8dcea" stroke-width="1.200"/><rect x="83" y="700.500" width="10" height="8" fill="none" stroke="#e8dcea" stroke-width="1.300"/><path d="M83 700H93" stroke="#b8a8ba" stroke-width="2"/><path d="M97 697V712.500" stroke="#b8a8ba" stroke-width="1.300"/><path d="M97 701V704.500" stroke="#fff" stroke-width="1.600"/>
<rect x="123" y="697" width="12.500" height="15.500" rx="0.800" fill="#f6f6f6"/><rect x="124.500" y="698.700" width="9.500" height="2.600" fill="#3a2a3a"/><g fill="#3a2a3a"><rect x="124.800" y="703" width="2.200" height="1.900"/><rect x="128.200" y="703" width="2.200" height="1.900"/><rect x="131.600" y="703" width="2.200" height="1.900"/><rect x="124.800" y="706" width="2.200" height="1.900"/><rect x="128.200" y="706" width="2.200" height="1.900"/><rect x="131.600" y="706" width="2.200" height="1.900"/><rect x="124.800" y="709" width="2.200" height="1.900"/><rect x="128.200" y="709" width="2.200" height="1.900"/><rect x="131.600" y="709" width="2.200" height="1.900"/></g>
<circle cx="167.500" cy="704.500" r="8" fill="#e33b2e"/><path d="M167.500 704.500L160.570 700.500A8 8 0 0 0 163.500 711.430Z" fill="#2da94f"/><path d="M167.500 704.500L160.570 700.500A8 8 0 0 0 167.500 712.500L171 706.500Z" fill="#2da94f"/><path d="M167.500 712.500A8 8 0 0 0 174.430 700.500H167.500L171 706.500Z" fill="#fbc116"/><path d="M167.500 704.500H174.430A8 8 0 0 0 160.570 700.500Z" fill="#e33b2e"/><circle cx="167.500" cy="704.500" r="3.800" fill="#fff"/><circle cx="167.500" cy="704.500" r="3" fill="#4a8af4"/>
<path d="M201.500 696.500H209Q213.300 696.500 213.300 700.800V705.200Q213.300 709.500 209 709.500H204.500L201.800 712.500V709.500Q197 709.300 197 705V700.800Q197 696.500 201.500 696.500Z" fill="#8a6ee0"/><path d="M202 698.300H208.500Q211.500 698.300 211.500 701.300V704.700Q211.500 707.700 208.500 707.700H202Q199 707.700 199 704.700V701.300Q199 698.300 202 698.300Z" fill="#f4f0fc"/><path d="M202.300 700C203.500 699.300 204 700.300 204.300 701.300C204.500 702 203.600 702.200 203.800 702.800C204.300 703.900 205.200 704.800 206.300 705.300C206.900 705.500 207.100 704.600 207.800 704.800C208.800 705.100 209.800 705.600 209.100 706.800C208.300 707.800 206.800 707.300 205.500 706.500C203.800 705.400 202.500 703.800 202 702C201.700 701 201.700 700.400 202.300 700Z" fill="#7d5fd9"/>
<circle cx="243.300" cy="704.500" r="7.900" fill="#2ca3dd"/><path d="M238.300 704.300L247.800 700.500L246.300 708.800L243.500 706.700L242 708.300L241.800 705.800L246 702L240.700 705.300Z" fill="#fff"/>
<rect x="273" y="696.500" width="16.500" height="16.500" rx="0.800" fill="#f9e9d3"/><path d="M277 699H286V702.200H280.300V704.300H284.600V707.300H280.300V711H277Z" fill="#ee8d36"/><path d="M277 699H286V700.100H278.100V711H277Z" fill="#f7b373"/><path d="M280.300 707.300H284.600L280.300 711Z" fill="#c96c1e" opacity="0.600"/>
<path d="M311.500 698.500H317L318.500 700H327.500V711.500H311.500Z" fill="#f5c33b"/><path d="M311.500 701.500H327.500V711.500H311.500Z" fill="#fbd75e"/><path d="M314.500 706H324.500V711.500H322V708.500H317V711.500H314.500Z" fill="#3d8fdc"/><rect x="313.500" y="703.800" width="12" height="2.200" fill="#3d8fdc"/>
<rect x="349" y="696.500" width="16.500" height="16.500" rx="1" fill="#f27a1e"/><path d="M361.500 700C358.500 700 355.800 701.800 354.500 704.300L352.800 704.800L354.200 706.200L353.200 707.800L355 707.300L355.300 709L356.800 707.500C359.500 706.300 361.500 703.500 361.500 700Z" fill="#fde6d0"/><circle cx="358.600" cy="702.900" r="1" fill="#f27a1e"/><path d="M353.500 708.200L352 710.500M355.300 709.500L354.500 711.500" stroke="#fde6d0" stroke-width="0.800"/>
<path d="M1082 707.200L1088.200 701.200L1094.400 707.200" fill="none" stroke="#f0e8e8" stroke-width="1.300"/>
<rect x="1107.500" y="700.800" width="11" height="7.400" fill="none" stroke="#f0e8e8" stroke-width="1.200"/><rect x="1118.800" y="703" width="1.200" height="3" fill="#f0e8e8"/><rect x="1109" y="702.300" width="5.500" height="4.400" fill="#f0e8e8"/><path d="M1104.500 700V702.500M1106.800 700V702.500M1104 702.500H1107.300V704.500Q1107.300 706 1105.650 706Q1104 706 1104 704.500Z" fill="#f0e8e8" stroke="#f0e8e8" stroke-width="0.800"/>
<path d="M1128.500 702.300H1131L1134.500 698.800V711L1131 707.300H1128.500Z" fill="none" stroke="#f0e8e8" stroke-width="1.100" stroke-linejoin="round"/><path d="M1136.500 702.500Q1138 704.800 1136.500 707.200M1138.800 700.800Q1141.200 704.800 1138.800 708.800" fill="none" stroke="#d8c8c8" stroke-width="1"/><path d="M1141.200 699.300Q1144.300 704.800 1141.200 710.300" fill="none" stroke="#9a8888" stroke-width="1"/>
<path d="M1239 696.500H1255V708.500H1250L1247 711.800L1244 708.500H1239Z" fill="#fff"/><path d="M1242 700H1252M1242 702.500H1252M1242 705H1248" stroke="#3a1a1e" stroke-width="1"/>
<path d="M1275.500 689V720" stroke="#7a6466" stroke-width="1"/>
</svg>

</div>
</body>
</html>
